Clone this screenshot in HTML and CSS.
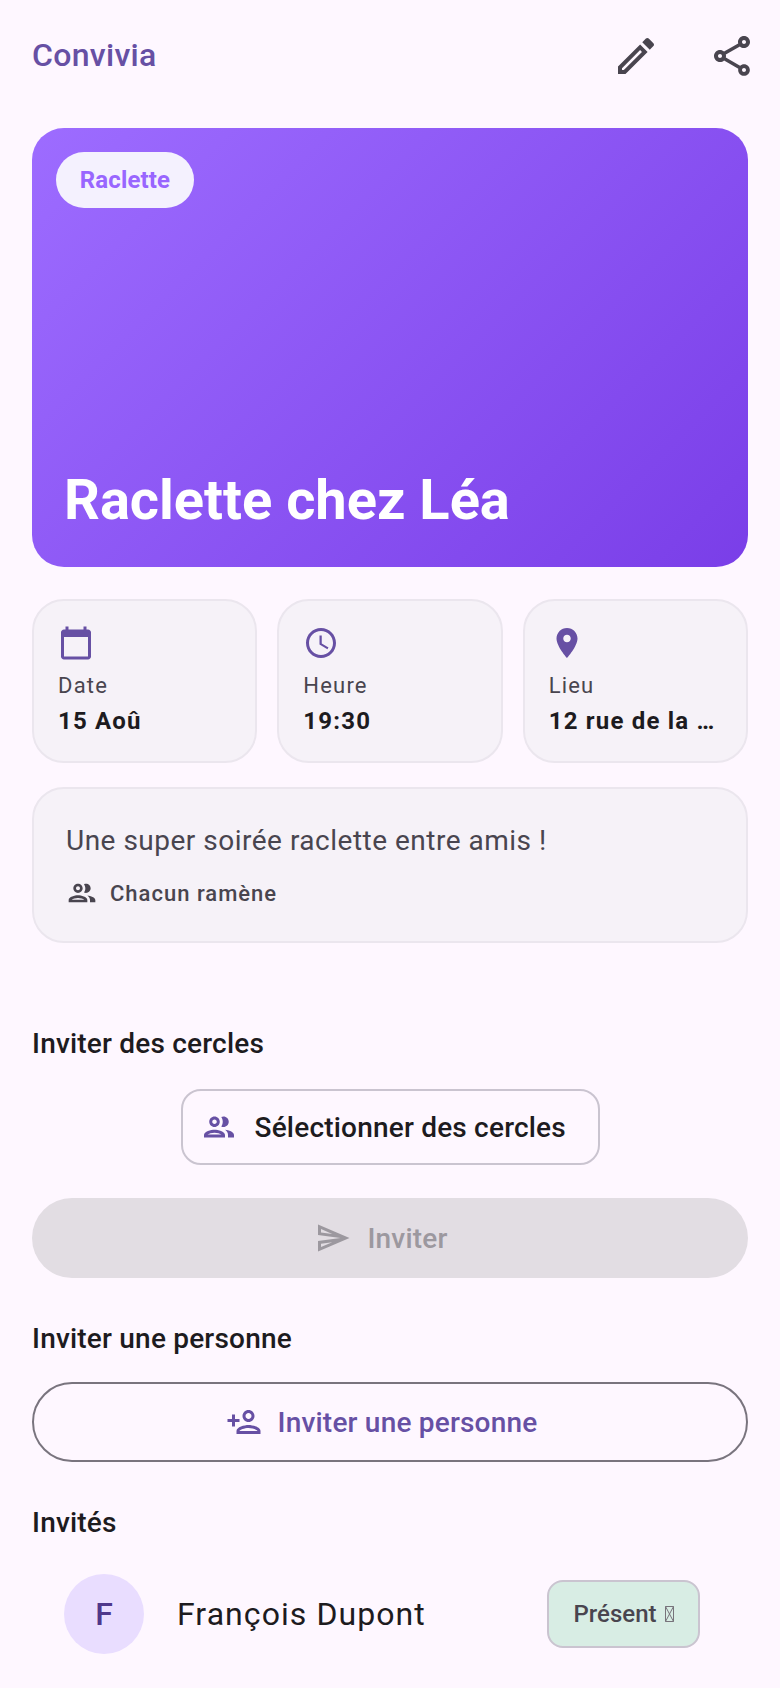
FILE: index.html
```html
<!DOCTYPE html>
<html lang="fr">
<head>
    <meta charset="UTF-8">
    <meta name="viewport" content="width=device-width, initial-scale=1.0">
    <title>Convivia</title>
    <link rel="stylesheet" href="styles.css">
</head>
<body>

    <!-- App bar -->
    <header class="app-bar">
        <h1 class="app-title">Convivia</h1>
        <div class="app-actions">
            <svg class="icon-48" viewBox="0 0 24 24"><path d="M14.06 9.02l.92.92L5.92 19H5v-.92l9.06-9.06M17.66 3c-.25 0-.51.1-.7.29l-1.83 1.83 3.75 3.75 1.83-1.83c.39-.39.39-1.02 0-1.41l-2.34-2.34c-.2-.2-.45-.29-.71-.29zm-3.6 3.19L3 17.25V21h3.75L17.81 9.94l-3.75-3.75z"/></svg>
            <svg class="icon-48" viewBox="0 0 24 24"><path d="M18 16.08c-.76 0-1.44.3-1.96.77L8.91 12.7c.05-.23.09-.46.09-.7s-.04-.47-.09-.7l7.05-4.11c.54.5 1.25.81 2.04.81 1.66 0 3-1.34 3-3s-1.34-3-3-3-3 1.34-3 3c0 .24.04.47.09.7L8.04 9.81C7.5 9.31 6.79 9 6 9c-1.66 0-3 1.34-3 3s1.34 3 3 3c.79 0 1.5-.31 2.04-.81l7.12 4.16c-.05.21-.08.43-.08.65 0 1.61 1.31 2.92 2.92 2.92s2.92-1.31 2.92-2.92c0-1.61-1.31-2.92-2.92-2.92zM18 4c.55 0 1 .45 1 1s-.45 1-1 1-1-.45-1-1 .45-1 1-1zM6 13c-.55 0-1-.45-1-1s.45-1 1-1 1 .45 1 1-.45 1-1 1zm12 7.02c-.55 0-1-.45-1-1s.45-1 1-1 1 .45 1 1-.45 1-1 1z"/></svg>
        </div>
    </header>

    <main class="content">

        <!-- Hero -->
        <section class="hero">
            <span class="hero-chip">Raclette</span>
            <h2 class="hero-title">Raclette chez Léa</h2>
        </section>

        <!-- Date, time, place -->
        <section class="info-row">
            <div class="info-card">
                <svg class="icon-36 primary" viewBox="0 0 24 24"><path d="M20 3h-1V1h-2v2H7V1H5v2H4c-1.1 0-2 .9-2 2v16c0 1.1.9 2 2 2h16c1.1 0 2-.9 2-2V5c0-1.1-.9-2-2-2zm0 18H4V8h16v13z"/></svg>
                <div class="info-label">Date</div>
                <div class="info-value">15 Aoû</div>
            </div>
            <div class="info-card">
                <svg class="icon-36 primary" viewBox="0 0 24 24"><path d="M11.99 2C6.47 2 2 6.48 2 12s4.47 10 9.99 10C17.52 22 22 17.52 22 12S17.52 2 11.99 2zM12 20c-4.42 0-8-3.58-8-8s3.58-8 8-8 8 3.58 8 8-3.58 8-8 8zm.5-13H11v6l5.25 3.15.75-1.23-4.5-2.67z"/></svg>
                <div class="info-label">Heure</div>
                <div class="info-value">19:30</div>
            </div>
            <div class="info-card">
                <svg class="icon-36 primary" viewBox="0 0 24 24"><path d="M12 2C8.13 2 5 5.13 5 9c0 5.25 7 13 7 13s7-7.75 7-13c0-3.87-3.13-7-7-7zm0 9.5c-1.38 0-2.5-1.12-2.5-2.5s1.12-2.5 2.5-2.5 2.5 1.12 2.5 2.5-1.12 2.5-2.5 2.5z"/></svg>
                <div class="info-label">Lieu</div>
                <div class="info-value">12 rue de la …</div>
            </div>
        </section>

        <!-- Description -->
        <section class="desc-card">
            <p class="desc-text">Une super soirée raclette entre amis !</p>
            <div class="desc-row">
                <svg class="icon-32" viewBox="0 0 24 24"><path d="M9 13.75c-2.34 0-7 1.17-7 3.5V19h14v-1.75c0-2.33-4.66-3.5-7-3.5zM4.34 17c.84-.58 2.87-1.25 4.66-1.25s3.82.67 4.66 1.25H4.34zM9 12c1.93 0 3.5-1.57 3.5-3.5S10.93 5 9 5 5.5 6.57 5.5 8.5 7.07 12 9 12zm0-5c.83 0 1.5.67 1.5 1.5S9.83 10 9 10s-1.5-.67-1.5-1.5S8.17 7 9 7zm7.04 6.81c1.16.84 1.96 1.96 1.96 3.44V19h4v-1.75c0-2.02-3.5-3.17-5.96-3.44zM15 12c1.93 0 3.5-1.57 3.5-3.5S16.93 5 15 5c-.54 0-1.04.13-1.5.35.63.89 1 1.98 1 3.15s-.37 2.26-1 3.15c.46.22.96.35 1.5.35z"/></svg>
                <span>Chacun ramène</span>
            </div>
        </section>

        <!-- Invite circles -->
        <h3 class="section-title first">Inviter des cercles</h3>
        <button class="circle-btn">
            <svg class="icon-36 primary" viewBox="0 0 24 24"><path d="M9 13.75c-2.34 0-7 1.17-7 3.5V19h14v-1.75c0-2.33-4.66-3.5-7-3.5zM4.34 17c.84-.58 2.87-1.25 4.66-1.25s3.82.67 4.66 1.25H4.34zM9 12c1.93 0 3.5-1.57 3.5-3.5S10.93 5 9 5 5.5 6.57 5.5 8.5 7.07 12 9 12zm0-5c.83 0 1.5.67 1.5 1.5S9.83 10 9 10s-1.5-.67-1.5-1.5S8.17 7 9 7zm7.04 6.81c1.16.84 1.96 1.96 1.96 3.44V19h4v-1.75c0-2.02-3.5-3.17-5.96-3.44zM15 12c1.93 0 3.5-1.57 3.5-3.5S16.93 5 15 5c-.54 0-1.04.13-1.5.35.63.89 1 1.98 1 3.15s-.37 2.26-1 3.15c.46.22.96.35 1.5.35z"/></svg>
            <span>Sélectionner des cercles</span>
        </button>
        <button class="wide-btn disabled">
            <svg class="icon-36" viewBox="0 0 24 24"><path d="M4.01 6.03l7.51 3.22-7.52-1 .01-2.22m7.5 8.72L4 17.97v-2.22l7.51-1M2.01 3L2 10l15 2-15 2 .01 7L23 12 2.01 3z"/></svg>
            <span>Inviter</span>
        </button>

        <!-- Invite one person -->
        <h3 class="section-title person">Inviter une personne</h3>
        <button class="wide-btn outlined">
            <svg class="icon-36" viewBox="0 0 24 24"><path d="M15 12c2.21 0 4-1.79 4-4s-1.79-4-4-4-4 1.79-4 4 1.79 4 4 4zm0-6c1.1 0 2 .9 2 2s-.9 2-2 2-2-.9-2-2 .9-2 2-2zm0 8c-2.67 0-8 1.34-8 4v2h16v-2c0-2.66-5.33-4-8-4zm-6 4c.22-.72 3.31-2 6-2 2.7 0 5.8 1.29 6 2H9zm-3-3v-3h3v-2H6V7H4v3H1v2h3v3z"/></svg>
            <span>Inviter une personne</span>
        </button>

        <!-- Guests -->
        <h3 class="section-title guests">Invités</h3>
        <div class="guest">
            <div class="avatar">F</div>
            <div class="guest-name">François Dupont</div>
            <div class="status-chip">
                <span>Présent</span>
                <svg class="tofu" viewBox="0 0 9 16"><path d="M.5.5h8v15h-8zM.5.5l8 15M8.5.5l-8 15"/></svg>
            </div>
        </div>

    </main>

</body>
</html>
```

FILE: styles.css
```css
* {
    box-sizing: border-box;
}
html, body {
    height: 100%;
}
body {
    margin: 0;
    overflow: hidden;
    background-color: #fef7ff;
    font-family: Roboto, "Liberation Sans", sans-serif;
    color: #1d1b20;
}
h1, h2, h3, p {
    margin: 0;
}
svg {
    display: block;
    fill: currentColor;
    flex-shrink: 0;
}
.icon-48 {
    width: 48px;
    height: 48px;
}
.icon-36 {
    width: 36px;
    height: 36px;
}
.icon-32 {
    width: 32px;
    height: 32px;
}
.primary {
    color: #6750a4;
}

/* App bar */
.app-bar {
    height: 112px;
    padding: 0 24px 0 32px;
    display: flex;
    align-items: center;
    justify-content: space-between;
}
.app-title {
    padding-bottom: 2px;
    font-size: 32px;
    font-weight: 500;
    letter-spacing: 0.3px;
    color: #6750a4;
}
.app-actions {
    display: flex;
    gap: 48px;
    color: #49454f;
}

.content {
    padding: 16px 32px 0;
}

/* Hero */
.hero {
    height: 439px;
    border-radius: 32px;
    padding: 24px 24px 35px;
    background: linear-gradient(135deg, #9d6cff 0%, #7a3ee8 100%);
    display: flex;
    flex-direction: column;
    justify-content: space-between;
    align-items: flex-start;
}
.hero-chip {
    height: 56px;
    width: 138px;
    border-radius: 28px;
    background-color: #f4f1fe;
    color: #9966ff;
    font-size: 24px;
    font-weight: 700;
    letter-spacing: 0.15px;
    display: flex;
    align-items: center;
    justify-content: center;
}
.hero-title {
    padding-left: 8px;
    font-size: 56px;
    font-weight: 700;
    line-height: 64px;
    color: #fff;
}

/* Info cards */
.info-row {
    margin-top: 32px;
    display: grid;
    grid-template-columns: repeat(3, 1fr);
    gap: 20px;
}
.info-card {
    height: 164px;
    padding: 24px;
    border: 2px solid #ebe6ee;
    border-radius: 32px;
    background-color: #f6f2f8;
    overflow: hidden;
}
.info-label {
    margin-top: 9px;
    font-size: 22px;
    line-height: 32px;
    letter-spacing: 1.2px;
    color: #49454f;
}
.info-value {
    margin-top: 3px;
    font-size: 24px;
    line-height: 32px;
    font-weight: 700;
    letter-spacing: 1.2px;
    white-space: nowrap;
}

/* Description */
.desc-card {
    margin-top: 24px;
    height: 156px;
    padding: 32px;
    border: 2px solid #ebe6ee;
    border-radius: 32px;
    background-color: #f6f2f8;
}
.desc-text {
    font-size: 28px;
    line-height: 40px;
    letter-spacing: 0.5px;
    color: #49454f;
}
.desc-row {
    margin-top: 16px;
    display: flex;
    align-items: center;
    gap: 12px;
    font-size: 22px;
    font-weight: 500;
    letter-spacing: 1px;
    color: #49454f;
}

/* Sections */
.section-title {
    font-size: 28px;
    line-height: 36px;
    font-weight: 500;
    letter-spacing: 0.2px;
}
.section-title.first {
    margin-top: 83px;
}
.section-title.person {
    margin-top: 43px;
}
.section-title.guests {
    margin-top: 43px;
}

/* Buttons */
button {
    font-family: inherit;
    font-size: 28px;
    font-weight: 500;
    letter-spacing: 0.2px;
    white-space: nowrap;
    display: flex;
    align-items: center;
    justify-content: center;
    background: none;
    border: none;
    padding: 0;
}
.circle-btn {
    margin: 27px auto 0;
    width: 419px;
    height: 76px;
    padding-left: 18px;
    border: 2px solid #cac4d0;
    border-radius: 20px;
    justify-content: flex-start;
    gap: 18px;
    color: #1d1b20;
}
.wide-btn {
    width: 100%;
    height: 80px;
    padding-right: 17px;
    border-radius: 40px;
    gap: 16px;
}
.wide-btn.disabled {
    margin-top: 33px;
    background-color: #e2dde3;
    color: #9c989f;
}
.wide-btn.outlined {
    margin-top: 25px;
    border: 2px solid #79747e;
    color: #6750a4;
}

/* Guest row */
.guest {
    margin-top: 33px;
    padding: 0 48px 0 32px;
    display: flex;
    align-items: center;
}
.avatar {
    width: 80px;
    height: 80px;
    border-radius: 50%;
    background-color: #e9ddff;
    color: #4f378b;
    font-size: 32px;
    font-weight: 500;
    display: flex;
    align-items: center;
    justify-content: center;
}
.guest-name {
    flex: 1;
    margin-left: 33px;
    font-size: 32px;
    letter-spacing: 1.07px;
}
.status-chip {
    height: 68px;
    width: 153px;
    border: 2px solid #cac4d0;
    border-radius: 16px;
    background-color: #d8ede4;
    color: #49454f;
    font-size: 24px;
    font-weight: 500;
    display: flex;
    align-items: center;
    justify-content: center;
    gap: 8px;
}
.tofu {
    width: 9px;
    height: 16px;
    fill: none;
    stroke: #77737b;
    stroke-width: 1;
}
```
